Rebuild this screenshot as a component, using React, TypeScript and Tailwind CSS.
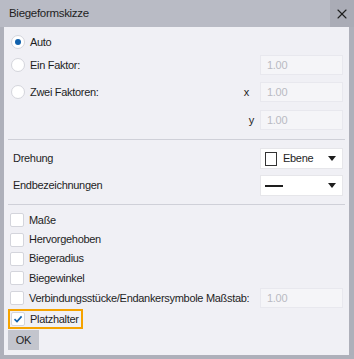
import { X } from 'lucide-react';

const font = { fontFamily: "'Liberation Sans', Arial, sans-serif" };

function Radio({ checked }: { checked?: boolean }) {
  return (
    <span className="flex h-[14px] w-[14px] shrink-0 items-center justify-center rounded-full border border-[#d4d5dc] bg-white">
      {checked && <span className="h-[6px] w-[6px] rounded-full bg-[#1061ad]" />}
    </span>
  );
}

function Check({ checked }: { checked?: boolean }) {
  return (
    <span className="flex h-[14px] w-[14px] shrink-0 items-center justify-center rounded-[2px] border border-[#d4d5dc] bg-white">
      {checked && (
        <svg width="10" height="10" viewBox="0 0 10 10">
          <path d="M1.5 5.2 L4 7.6 L8.6 2.4" fill="none" stroke="#1061ad" strokeWidth="1.6" />
        </svg>
      )}
    </span>
  );
}

function NumBox() {
  return (
    <div className="flex h-[20px] w-[83px] items-center border border-[#e8e8ee] bg-[#f5f5f8] pl-[6px] text-[11px] text-[#b9bac2]">
      1.00
    </div>
  );
}

function Caret() {
  return (
    <svg width="8" height="5" viewBox="0 0 8 5" className="ml-auto mr-[6px]">
      <path d="M0 0 H8 L4 5 Z" fill="#1e1e1e" />
    </svg>
  );
}

export default function App() {
  const checks = [
    { label: 'Maße', h: 'h-[20px]' },
    { label: 'Hervorgehoben', h: 'h-[19px]' },
    { label: 'Biegeradius', h: 'h-[19px]' },
    { label: 'Biegewinkel', h: 'h-[20px]' },
  ];

  return (
    <div className="flex h-[359px] w-[354px] flex-col bg-[#aeb0ba] text-[11px] tracking-[-0.3px] text-[#1e1e1e]" style={font}>
      <div className="flex h-[27px] shrink-0 items-center bg-[#b9bbc5]">
        <span className="pl-[9px] text-[11.5px]">Biegeformskizze</span>
        <div className="ml-auto flex h-full w-[24px] items-center justify-center bg-[#aaacb6]">
          <X size={16} strokeWidth={1.6} className="text-[#1e1e1e]" />
        </div>
      </div>

      <div className="ml-[4px] mr-[5px] mb-[4px] flex flex-1 flex-col bg-[#f0f0f5] px-[4px] pt-[4px]">
        <div className="flex h-[22px] items-center gap-[5px] pl-[3px]">
          <Radio checked />
          <span>Auto</span>
        </div>
        <div className="mt-[2px] flex h-[20px] items-center gap-[5px] pl-[3px]">
          <Radio />
          <span>Ein Faktor:</span>
          <div className="ml-auto mr-[2px]"><NumBox /></div>
        </div>
        <div className="mt-[7px] flex h-[20px] items-center gap-[5px] pl-[3px]">
          <Radio />
          <span>Zwei Faktoren:</span>
          <span className="ml-auto mr-[6px]">x</span>
          <div className="mr-[2px]"><NumBox /></div>
        </div>
        <div className="mt-[8px] flex h-[20px] items-center">
          <span className="ml-auto mr-[6px]">y</span>
          <div className="mr-[2px]"><NumBox /></div>
        </div>

        <div className="mt-[9px] h-px bg-[#cfd0d8]" />

        <div className="mt-[8px] flex h-[21px] items-center pl-[5px]">
          <span>Drehung</span>
          <div className="ml-auto mr-[2px] flex h-[21px] w-[83px] items-center border border-[#e6e6ea] bg-white pl-[4px]">
            <span className="h-[14px] w-[12px] border border-[#333]" />
            <span className="ml-[6px]">Ebene</span>
            <Caret />
          </div>
        </div>
        <div className="mt-[6px] flex h-[21px] items-center pl-[5px]">
          <span>Endbezeichnungen</span>
          <div className="ml-auto mr-[2px] flex h-[21px] w-[83px] items-center border border-[#e6e6ea] bg-white pl-[4px]">
            <span className="h-[2px] w-[18px] bg-[#1e1e1e]" />
            <Caret />
          </div>
        </div>

        <div className="mt-[8px] h-px bg-[#cfd0d8]" />

        <div className="mt-[5px] flex flex-col">
          {checks.map(c => (
            <div key={c.label} className={`flex ${c.h} items-center gap-[5px] pl-[2px]`}>
              <Check />
              <span>{c.label}</span>
            </div>
          ))}
          <div className="flex h-[20px] items-center gap-[5px] pl-[2px]">
            <Check />
            <span className="whitespace-nowrap">Verbindungsstücke/Endankersymbole Maßstab:</span>
            <div className="ml-auto mr-[2px]"><NumBox /></div>
          </div>
          <div className="mt-[1px] flex">
            <div className="flex h-[20px] w-[75px] items-center gap-[5px] border-2 border-[#f5a300] pl-[1px]">
              <Check checked />
              <span>Platzhalter</span>
            </div>
          </div>
          <div className="mt-[1px] flex">
            <div className="flex h-[20px] w-[31px] items-center justify-center bg-[#c3c5cd]">OK</div>
          </div>
        </div>
      </div>
    </div>
  );
}
